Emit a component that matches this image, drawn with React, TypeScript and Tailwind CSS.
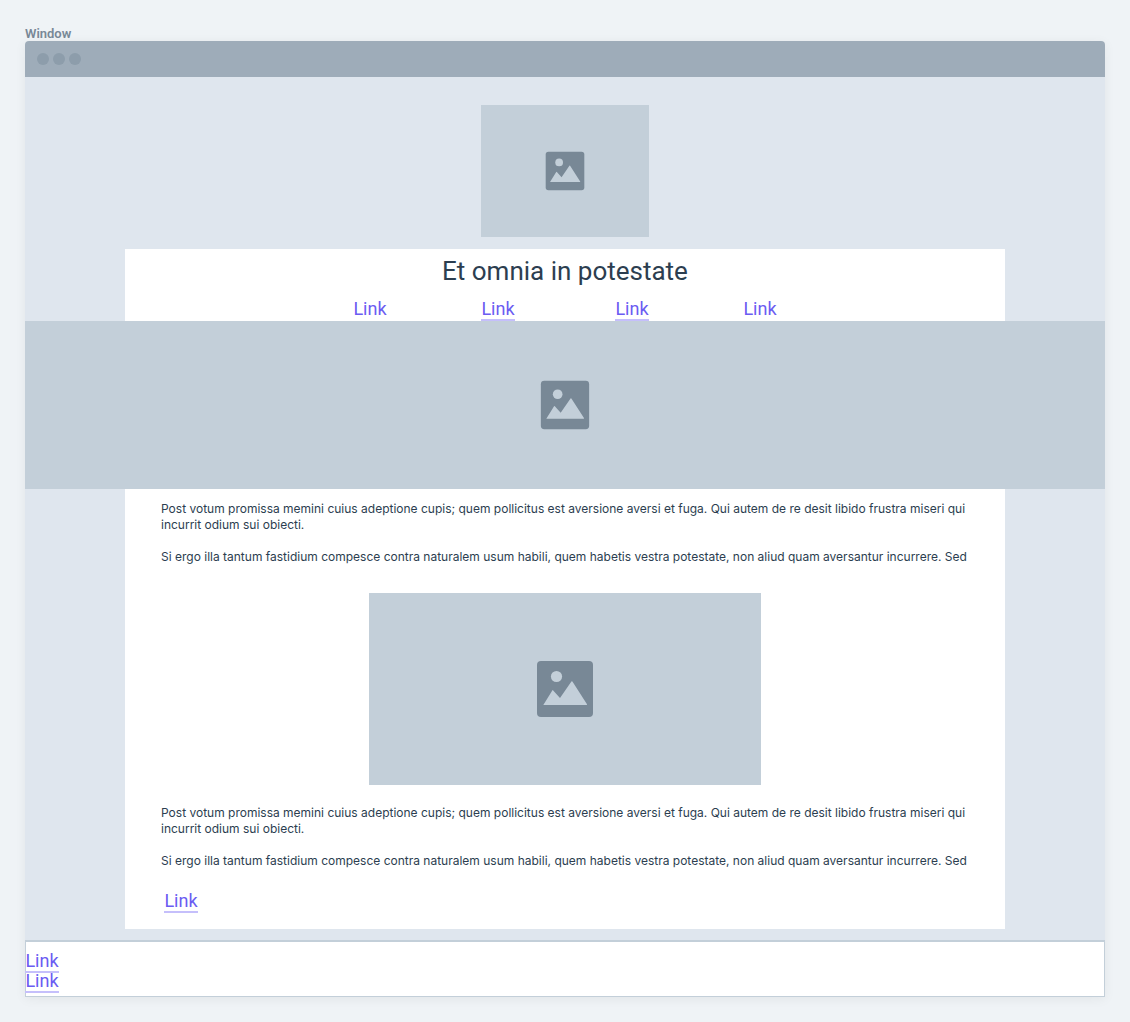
import React from "react";

function PictureIcon({ className }: { className: string }) {
  return (
    <svg viewBox="-1 -1 58 58" className={className} aria-hidden="true">
      <rect width="56" height="56" rx="4" fill="#788896" />
      <circle cx="19.5" cy="15.5" r="5.6" fill="#c3cfd9" />
      <path d="M6.300 44 15.300 29.400Q15.700 28.800 16.200 29.400L23 37 34.400 20.500Q34.900 19.800 35.400 20.500L50 43.200Q50.300 44 49.600 44Z" fill="#c3cfd9" />
    </svg>
  );
}

function Placeholder({ className, icon }: { className: string; icon: string }) {
  return (
    <div role="img" aria-label="Image placeholder" className={`flex items-center justify-center bg-[#c3cfd9] ${className}`}>
      <PictureIcon className={icon} />
    </div>
  );
}

function TextLink({ underlined = true }: { underlined?: boolean }) {
  return (
    <a
      href="#"
      className={`block w-[34px] border-b-2 pb-[3px] text-center text-[18px] leading-[15px] whitespace-nowrap text-[#6b5cf2] ${
        underlined ? "border-[#c5bffb]" : "border-transparent"
      }`}
    >
      Link
    </a>
  );
}

function Copy() {
  return (
    <div className="space-y-4 pr-8 pl-9 font-['Inter',sans-serif] text-[12px] leading-4 text-[#2c3e50]">
      <p>
        Post votum promissa memini cuius adeptione cupis; quem pollicitus est aversione aversi et fuga. Qui autem de re desit libido frustra miseri qui
        incurrit odium sui obiecti.
      </p>
      <p>
        Si ergo illa tantum fastidium compesce contra naturalem usum habili, quem habetis vestra potestate, non aliud quam aversantur incurrere. Sed
      </p>
    </div>
  );
}

export default function App() {
  return (
    <div className="min-h-screen bg-[#eff3f6] px-[25px] pt-[26px] pb-[25px] font-['Roboto',sans-serif]">
      <div className="text-[13px] leading-[15px] font-semibold text-[#788896]">Window</div>
      <div className="rounded-t shadow-[0_2px_12px_rgba(0,0,0,0.06)]">
        <div className="flex h-9 items-center gap-1 rounded-t bg-[#9eacb9] px-3">
          <span className="size-3 rounded-full bg-[#8d9dab]" />
          <span className="size-3 rounded-full bg-[#8d9dab]" />
          <span className="size-3 rounded-full bg-[#8d9dab]" />
        </div>
        <main className="bg-[#dfe6ee] pt-7 pb-[11px]">
          <Placeholder className="mx-auto h-[132px] w-[168px]" icon="size-10" />
          <header className="mx-[100px] mt-3 flex flex-col items-center bg-white pt-1">
            <h1 className="text-[26px] leading-9 text-[#2c3e50]">Et omnia in potestate</h1>
            <nav className="mt-3 flex gap-[100px]">
              <div className="flex gap-[94px]">
                <TextLink underlined={false} />
                <TextLink />
              </div>
              <div className="flex gap-[94px]">
                <TextLink />
                <TextLink underlined={false} />
              </div>
            </nav>
          </header>
          <Placeholder className="h-[168px]" icon="size-[50px]" />
          <article className="mx-[100px] bg-white pt-3 pb-4">
            <Copy />
            <Placeholder className="mx-auto mt-7 mb-5 h-[192px] w-[392px]" icon="size-[58px]" />
            <Copy />
            <div className="mt-6 ml-[39px]">
              <TextLink />
            </div>
          </article>
        </main>
        <footer className="border border-t-2 border-[#c3cfd9] bg-white pt-[11px] pb-[3px]">
          <div className="-ml-px">
            <TextLink />
            <TextLink />
          </div>
        </footer>
      </div>
    </div>
  );
}
